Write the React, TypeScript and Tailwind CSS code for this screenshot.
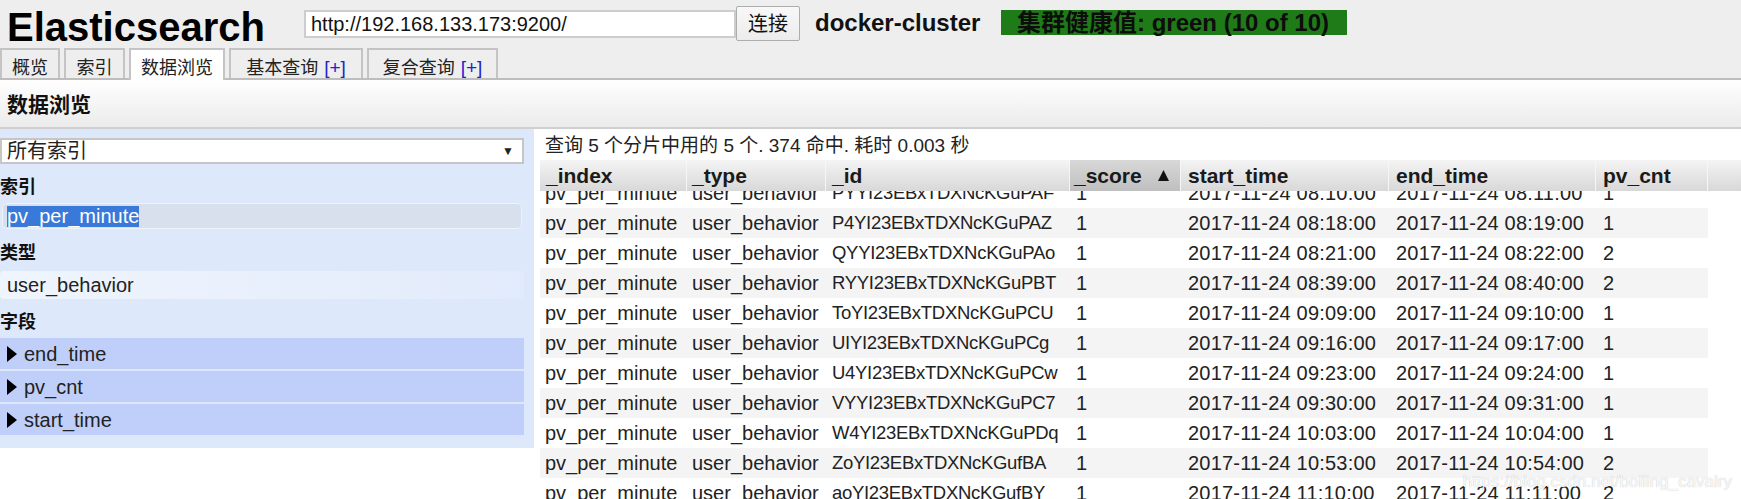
import React from "react";

const FONT = "font-['Liberation_Sans','Noto_Sans_CJK_SC',sans-serif]";

const TABS = [
  { label: "概览", w: "w-[60px]", plus: false, active: false },
  { label: "索引", w: "w-[61px]", plus: false, active: false },
  { label: "数据浏览", w: "w-[96px]", plus: false, active: true },
  { label: "基本查询", w: "w-[134px]", plus: true, active: false },
  { label: "复合查询", w: "w-[131px]", plus: true, active: false },
];

const COLS = [
  { name: "_index", w: "w-[147px]", pad: "pl-[6px]" },
  { name: "_type", w: "w-[139px]", pad: "pl-[5px]" },
  { name: "_id", w: "w-[244px]", pad: "pl-[6px]" },
  { name: "_score", w: "w-[111px]", pad: "pl-[4px]", sorted: true },
  { name: "start_time", w: "w-[208px]", pad: "pl-[7px]" },
  { name: "end_time", w: "w-[207px]", pad: "pl-[7px]" },
  { name: "pv_cnt", w: "w-[112px]", pad: "pl-[7px]" },
];

// id, start, end, pv_cnt
const ROWS = [
  ["PYYI23EBxTDXNcKGuPAF", "08:10:00", "08:11:00", "1"],
  ["P4YI23EBxTDXNcKGuPAZ", "08:18:00", "08:19:00", "1"],
  ["QYYI23EBxTDXNcKGuPAo", "08:21:00", "08:22:00", "2"],
  ["RYYI23EBxTDXNcKGuPBT", "08:39:00", "08:40:00", "2"],
  ["ToYI23EBxTDXNcKGuPCU", "09:09:00", "09:10:00", "1"],
  ["UIYI23EBxTDXNcKGuPCg", "09:16:00", "09:17:00", "1"],
  ["U4YI23EBxTDXNcKGuPCw", "09:23:00", "09:24:00", "1"],
  ["VYYI23EBxTDXNcKGuPC7", "09:30:00", "09:31:00", "1"],
  ["W4YI23EBxTDXNcKGuPDq", "10:03:00", "10:04:00", "1"],
  ["ZoYI23EBxTDXNcKGufBA", "10:53:00", "10:54:00", "2"],
  ["aoYI23EBxTDXNcKGufBY", "11:10:00", "11:11:00", "2"],
];

const FIELDS = ["end_time", "pv_cnt", "start_time"];

function Arrow() {
  return (
    <svg width="10" height="16" viewBox="0 0 10 16" className="shrink-0">
      <polygon points="0,0 10,8 0,16" fill="#000" />
    </svg>
  );
}

export default function App() {
  return (
    <div className={`relative h-[499px] w-full overflow-hidden bg-white text-[#222] ${FONT}`}>
      {/* ── Kopf ── */}
      <div className="bg-[#eeeeee]">
        <div className="flex h-[48px] items-start">
          <h1 className="mt-[7px] w-[304px] pl-[7px] text-[40px] font-bold leading-[40px] text-black">Elasticsearch</h1>
          <div className="mt-[10px] flex h-[28px] w-[432px] items-center border-2 border-[#cdcdcd] bg-white pl-[5px] text-[20px] leading-[22px] text-[#111]">
            http://192.168.133.173:9200/
          </div>
          <button className="mt-[6px] h-[35px] w-[64px] rounded-[2px] border border-[#adadad] bg-linear-to-b from-[#f8f8f8] to-[#ececec] text-[20px] leading-[22px] text-[#111]">
            连接
          </button>
          <div className="mt-[11px] w-[201px] pl-[15px] text-[24px] font-bold leading-[24px] text-[#111]">docker-cluster</div>
          <div className="mt-[10px] h-[25px] w-[346px] bg-[#1f7b17] pl-[16px] text-[24px] font-bold leading-[25px] whitespace-nowrap text-[#0d0d0d]">
            集群健康值: green (10 of 10)
          </div>
        </div>

        <div className="flex h-[32px] items-end gap-[4px] border-b-2 border-[#bdbdbd]">
          {TABS.map((t) => (
            <div
              key={t.label}
              className={`${t.w} border-2 border-b-0 border-[#c4c4c4] pt-[8px] text-center text-[18px] leading-[20px] whitespace-nowrap text-[#222] ${
                t.active ? "relative -mb-[2px] h-[32px] bg-white" : "h-[30px] bg-[#eeeeee]"
              }`}
            >
              {t.label}
              {t.plus && <span className="ml-[6px] text-[19px] text-[#2222cc]">[+]</span>}
            </div>
          ))}
        </div>
      </div>

      <div className="h-[49px] border-b-2 border-[#cfcfcf] bg-linear-to-b from-white to-[#ebebeb] pl-[7px] pt-[2px] text-[21px] font-bold leading-[45px] text-[#111]">
        数据浏览
      </div>

      {/* ── Inhalt ── */}
      <div className="flex">
        <div className="h-[319px] w-[534px] shrink-0 bg-[#dde8fb] pr-[10px] pt-[9px]">
          <div className="flex h-[26px] items-center justify-between border-2 border-[#c6c6c6] bg-white pl-[5px] pr-[8px] text-[20px] leading-[22px]">
            <span>所有索引</span>
            <span className="text-[12px] leading-[12px] text-[#222]">▼</span>
          </div>

          <div className="mt-[12px] h-[22px] text-[18px] font-bold leading-[22px] text-[#111]">索引</div>
          <div className="mx-[2px] mt-[5px] flex h-[26px] items-center rounded-[5px] border border-[#eef2fa] bg-[#d8e0ee] pl-[4px]">
            <span className="bg-[#3879d9] text-[20px] leading-[21px] text-white">pv_per_minute</span>
          </div>

          <div className="mt-[13px] h-[22px] text-[18px] font-bold leading-[22px] text-[#111]">类型</div>
          <div className="mt-[7px] h-[28px] rounded-[4px] bg-linear-to-r from-[#eff5fd] to-[#e2ebfb] pl-[7px] text-[20px] leading-[28px]">
            user_behavior
          </div>

          <div className="mt-[12px] h-[22px] text-[18px] font-bold leading-[22px] text-[#111]">字段</div>
          <div className="mt-[5px] flex flex-col gap-[2px]">
            {FIELDS.map((f) => (
              <div key={f} className="flex h-[31px] items-center bg-[#bfcffa] pl-[7px] text-[20px] leading-[22px]">
                <Arrow />
                <span className="ml-[7px]">{f}</span>
              </div>
            ))}
          </div>
        </div>

        <div className="ml-[6px] flex h-[370px] flex-1 flex-col">
          <div className="h-[31px] shrink-0 pl-[5px] pt-[2px] text-[19px] leading-[29px] whitespace-nowrap">
            查询 5 个分片中用的 5 个. 374 命中. 耗时 0.003 秒
          </div>

          <div className="relative z-10 flex h-[31px] shrink-0 bg-linear-to-b from-[#f4f4f4] to-[#d8d8d8] text-[21px] font-bold leading-[31px] text-[#1a1a1a]">
            {COLS.map((c) => (
              <div
                key={c.name}
                className={`${c.w} ${c.pad} flex items-center border-r border-[#f6f6f6] ${
                  c.sorted ? "bg-linear-to-b from-[#d8d8d8] to-[#bfbfbf]" : ""
                }`}
              >
                {c.name}
                {c.sorted && (
                  <svg width="11" height="11" viewBox="0 0 11 11" className="ml-[16px]">
                    <polygon points="5.5,0 11,11 0,11" fill="#111" />
                  </svg>
                )}
              </div>
            ))}
            <div className="flex-1" />
          </div>

          <div className="flex-1 overflow-hidden">
            <div className="-mt-[13px] w-[1168px]">
              {ROWS.map((r, i) => (
                <div
                  key={r[0]}
                  className={`flex h-[30px] items-center text-[20px] leading-[22px] whitespace-nowrap ${
                    i % 2 === 1 ? "bg-[#f4f4f4]" : "bg-white"
                  }`}
                >
                  <div className="w-[147px] pl-[5px]">pv_per_minute</div>
                  <div className="w-[139px] pl-[5px]">user_behavior</div>
                  <div className="w-[244px] overflow-hidden pl-[6px] text-[18.5px] tracking-[-0.3px]">{r[0]}</div>
                  <div className="w-[111px] pl-[6px]">1</div>
                  <div className="w-[208px] pl-[7px] tracking-[0.2px]">2017-11-24 {r[1]}</div>
                  <div className="w-[207px] pl-[7px] tracking-[0.2px]">2017-11-24 {r[2]}</div>
                  <div className="w-[112px] pl-[7px]">{r[3]}</div>
                </div>
              ))}
            </div>
          </div>
        </div>
      </div>

      <div className="absolute bottom-[7px] right-[9px] text-[17px] leading-[20px] text-white/90 [text-shadow:0_0_1px_rgba(0,0,0,0.3)]">
        https://blog.csdn.net/boiling_cavalry
      </div>
    </div>
  );
}
